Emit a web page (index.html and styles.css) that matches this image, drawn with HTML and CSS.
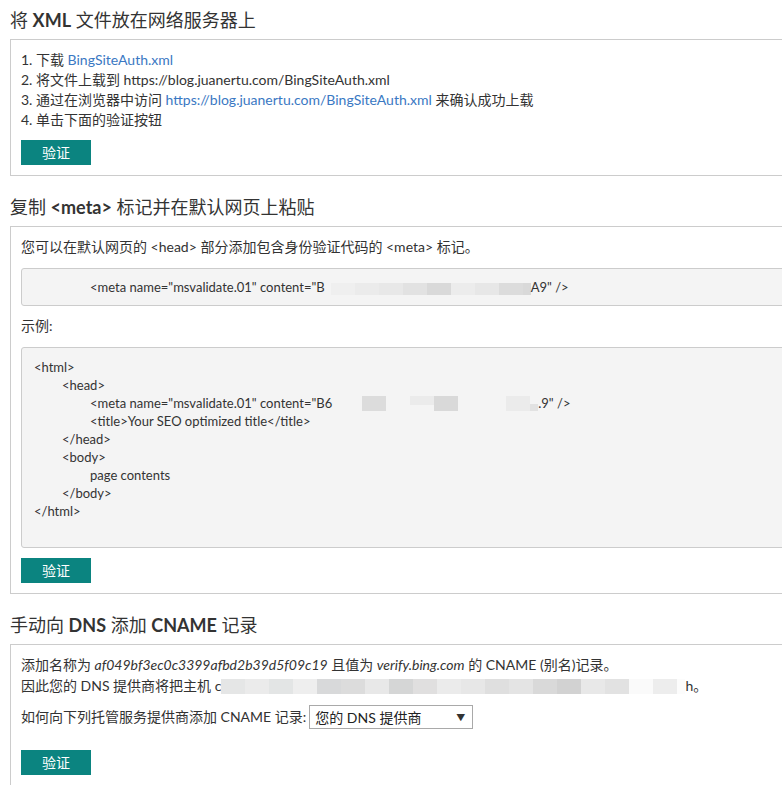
FILE: index.html
```html
<!DOCTYPE html>
<html lang="zh-CN">
<head>
<meta charset="utf-8">
<title>验证</title>
<link rel="stylesheet" href="styles.css">
</head>
<body>
<section class="sec first">
  <h2 class="title">将 <span class="lat">XML</span> 文件放在网络服务器上</h2>
  <div class="box">
    <div class="line">1. 下载 <a class="link" href="#">BingSiteAuth.xml</a></div>
    <div class="line">2. 将文件上载到 https://blog.juanertu.com/BingSiteAuth.xml</div>
    <div class="line">3. 通过在浏览器中访问 <a class="link" href="#">https://blog.juanertu.com/BingSiteAuth.xml</a> 来确认成功上载</div>
    <div class="line">4. 单击下面的验证按钮</div>
    <button class="btn">验证</button>
  </div>
</section>

<section class="sec">
  <h2 class="title">复制 <span class="lat">&lt;meta&gt;</span> 标记并在默认网页上粘贴</h2>
  <div class="box">
    <div class="line">您可以在默认网页的 &lt;head&gt; 部分添加包含身份验证代码的 &lt;meta&gt; 标记。</div>
    <div class="code code-one">&lt;meta name="msvalidate.01" content="B<span class="blur"><i class="px c1"></i><i class="px c2"></i><i class="px c3"></i><i class="px c4"></i><i class="px c5"></i><i class="px c6"></i><i class="px c7"></i><i class="px c8"></i><i class="px sm c5"></i></span>A9" /&gt;</div>
    <div class="line label-ex">示例:</div>
    <div class="code code-ex">
      <div class="cl">&lt;html&gt;</div>
      <div class="cl i1">&lt;head&gt;</div>
      <div class="cl i2">&lt;meta name="msvalidate.01" content="B6<span class="blur"><i class="gap w30"></i><i class="px c8"></i><i class="gap"></i><i class="px half c2"></i><i class="px c5"></i><i class="gap w48"></i><i class="px c2"></i><i class="px sm low c4"></i></span>.9" /&gt;</div>
      <div class="cl i2">&lt;title&gt;Your SEO optimized title&lt;/title&gt;</div>
      <div class="cl i1">&lt;/head&gt;</div>
      <div class="cl i1">&lt;body&gt;</div>
      <div class="cl i2">page contents</div>
      <div class="cl i1">&lt;/body&gt;</div>
      <div class="cl">&lt;/html&gt;</div>
    </div>
    <button class="btn">验证</button>
  </div>
</section>

<section class="sec">
  <h2 class="title">手动向 <span class="lat">DNS</span> 添加 <span class="lat">CNAME</span> 记录</h2>
  <div class="box">
    <div class="line">添加名称为 <em>af049bf3ec0c3399afbd2b39d5f09c19</em> 且值为 <em>verify.bing.com</em> 的 CNAME (别名)记录。</div>
    <div class="line line2">因此您的 DNS 提供商将把主机 c<span class="blur"><i class="px d1"></i><i class="px d2"></i><i class="px d3"></i><i class="px d4"></i><i class="px d5"></i><i class="px d6"></i><i class="px d7"></i><i class="px d8"></i><i class="px d9"></i><i class="px d10"></i><i class="px d11"></i><i class="px d12"></i><i class="px d13"></i><i class="px d14"></i><i class="px d15"></i><i class="px d16"></i><i class="px d17"></i><i class="px d18"></i><i class="px d19"></i><i class="px sm d20"></i></span>h。</div>
    <div class="pick">
      <span class="pick-label">如何向下列托管服务提供商添加 CNAME 记录:</span>
      <div class="select"><span>您的 DNS 提供商</span><span class="arrow">▼</span></div>
    </div>
    <button class="btn btn-last">验证</button>
  </div>
</section>
</body>
</html>
```

FILE: styles.css
```css
html, body {
  overflow: hidden;
}
body {
  margin: 8px 0 0 10px;
  background: #fff;
  color: #333;
  font-family: "Lato", "Noto Sans CJK SC", sans-serif;
  font-size: 14px;
}
.sec {
  margin-top: 19px;
}
.sec.first {
  margin-top: 0;
}
.title {
  margin: 0 0 7px;
  font-size: 18px;
  line-height: 24px;
  font-weight: 400;
  color: #333;
}
.lat {
  font-weight: 700;
}
.box {
  width: 820px;
  border: 1px solid #cccccc;
  padding: 10px;
  box-sizing: border-box;
}
.line {
  line-height: 20px;
  white-space: nowrap;
}
.line2 {
  margin-top: 1px;
}
.link {
  color: #3a78c3;
  text-decoration: none;
}
em {
  font-style: italic;
}
.btn {
  display: block;
  margin-top: 10px;
  width: 70px;
  height: 25px;
  padding: 0;
  border: none;
  background: #0b8480;
  color: #fff;
  font-family: "Noto Sans CJK SC", sans-serif;
  font-size: 14px;
  line-height: 25px;
}
.btn-last {
  margin-top: 21px;
}
.code {
  background: #f4f4f4;
  border: 1px solid #cccccc;
  border-radius: 3px;
  white-space: nowrap;
  font-size: 13px;
}
.code-one {
  margin-top: 11px;
  padding: 8px 0 8px 68px;
  line-height: 20px;
}
.code-one .blur {
  margin-left: 6px;
}
.label-ex {
  margin-top: 10px;
}
.code-ex {
  margin-top: 11px;
  padding: 10px 12px 27px;
}
.cl {
  line-height: 18px;
}
.i1 {
  padding-left: 28px;
}
.i2 {
  padding-left: 56px;
}
.blur {
  display: inline-flex;
  align-items: flex-start;
  vertical-align: -3px;
  height: 15px;
}
.px {
  display: block;
  width: 24px;
  height: 15px;
}
.px.sm {
  width: 8px;
}
.px.half {
  height: 9px;
}
.px.low {
  margin-top: 8px;
  height: 7px;
}
.gap {
  display: block;
  width: 24px;
  height: 15px;
}
.gap.w30 {
  width: 30px;
}
.gap.w48 {
  width: 48px;
}
.code-one .blur .px {
  height: 12px;
  margin-top: 2px;
}
.c1 { background: #efefef; }
.c2 { background: #ebebeb; }
.c3 { background: #e8e8e8; }
.c4 { background: #e2e2e2; }
.c5 { background: #d9d9d9; }
.c6 { background: #ececec; }
.c7 { background: #e7e7e7; }
.c8 { background: #dcdcdc; }
.d1 { background: #e5e6e6; }
.d2 { background: #ebebeb; }
.d3 { background: #e3e5e5; }
.d4 { background: #eeeeee; }
.d5 { background: #d8d9da; }
.d6 { background: #dcdcdc; }
.d7 { background: #e8e8e8; }
.d8 { background: #d5d6d6; }
.d9 { background: #e0dfdf; }
.d10 { background: #ebebeb; }
.d11 { background: #e7e7e7; }
.d12 { background: #dfdfdf; }
.d13 { background: #e4e4e4; }
.d14 { background: #d9d9d9; }
.d15 { background: #d2d2d2; }
.d16 { background: #e8e8e8; }
.d17 { background: #e2e2e2; }
.d18 { background: #fafafa; }
.d19 { background: #ededed; }
.d20 { background: #fcfcfc; }
.pick {
  display: flex;
  align-items: center;
  margin-top: 9px;
  white-space: nowrap;
}
.pick-label {
  line-height: 20px;
}
.select {
  display: flex;
  justify-content: space-between;
  align-items: center;
  margin-left: 3px;
  width: 164px;
  height: 24px;
  box-sizing: border-box;
  border: 1px solid #a9a9a9;
  padding: 0 7px 0 5px;
  background: #fff;
  color: #222;
  font-size: 14px;
}
.arrow {
  font-size: 9px;
  color: #333;
}
```
